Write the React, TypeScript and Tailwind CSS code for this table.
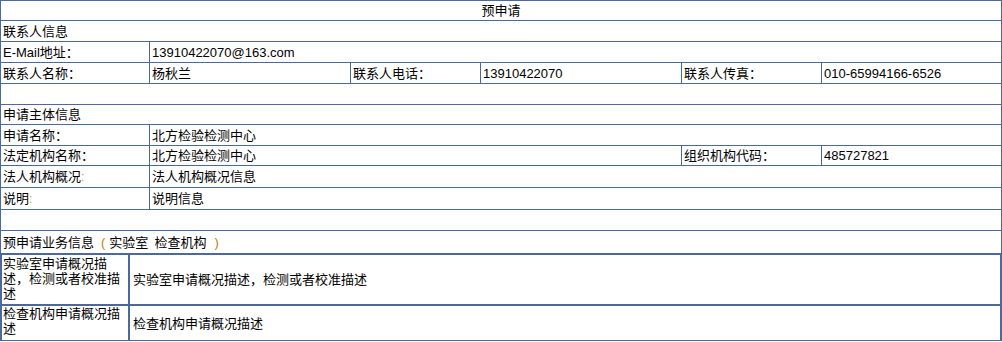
import React from "react";

type CellProps = { w?: string; children?: React.ReactNode; edge?: boolean };

// A single bordered cell of the form grid; `edge` marks the last cell in a row.
function Cell({ w, children, edge }: CellProps) {
  return (
    <div
      className={
        (w ? w + " shrink-0 " : "flex-1 ") +
        (edge ? "" : "border-r border-[#4b6a9b] ") +
        "flex items-center overflow-hidden whitespace-nowrap pl-[2px]"
      }
    >
      {children}
    </div>
  );
}

function Row({ h, children }: { h: string; children?: React.ReactNode }) {
  return <div className={h + " flex border-b border-[#4b6a9b]"}>{children}</div>;
}

const Colon = () => <span className="text-[#e6a000]">:</span>;

export default function App() {
  return (
    <div className="w-[1002px] bg-white text-[13px] leading-[15px] text-black font-['Liberation_Sans','Noto_Sans_CJK_SC',sans-serif]">
      <div className="border-x border-t border-[#4b6a9b]">
        <Row h="h-[20px]">
          <div className="flex flex-1 items-center justify-center">预申请</div>
        </Row>
        <Row h="h-[21px]">
          <Cell edge>联系人信息</Cell>
        </Row>
        <Row h="h-[21px]">
          <Cell w="w-[149px]">E-Mail地址：</Cell>
          <Cell edge>13910422070@163.com</Cell>
        </Row>
        <Row h="h-[21px]">
          <Cell w="w-[149px]">联系人名称：</Cell>
          <Cell w="w-[201px]">杨秋兰</Cell>
          <Cell w="w-[130px]">联系人电话：</Cell>
          <Cell w="w-[201px]">13910422070</Cell>
          <Cell w="w-[140px]">联系人传真：</Cell>
          <Cell edge>010-65994166-6526</Cell>
        </Row>
        <Row h="h-[21px]" />
        <Row h="h-[20px]">
          <Cell edge>申请主体信息</Cell>
        </Row>
        <Row h="h-[21px]">
          <Cell w="w-[149px]">申请名称：</Cell>
          <Cell edge>北方检验检测中心</Cell>
        </Row>
        <Row h="h-[20px]">
          <Cell w="w-[149px]">法定机构名称：</Cell>
          <Cell w="w-[532px]">北方检验检测中心</Cell>
          <Cell w="w-[140px]">组织机构代码：</Cell>
          <Cell edge>485727821</Cell>
        </Row>
        <Row h="h-[22px]">
          <Cell w="w-[149px]">
            法人机构概况
            <Colon />
          </Cell>
          <Cell edge>法人机构概况信息</Cell>
        </Row>
        <Row h="h-[22px]">
          <Cell w="w-[149px]">
            说明
            <Colon />
          </Cell>
          <Cell edge>说明信息</Cell>
        </Row>
        <Row h="h-[21px]" />
        <Row h="h-[23px]">
          <Cell edge>
            <span>预申请业务信息</span>
            <span className="ml-[7px] text-[#c08000]">(</span>
            <span className="ml-[4px]">实验室</span>
            <span className="ml-[6px]">检查机构</span>
            <span className="ml-[8px] text-[#c08000]">)</span>
          </Cell>
        </Row>
      </div>

      <div className="border-x-2 border-t border-[#4b6a9b]">
        <div className="flex h-[51px] border-b-2 border-[#4b6a9b]">
          <div className="w-[128px] shrink-0 border-r-2 border-[#4b6a9b] pl-px pt-px whitespace-nowrap">
            实验室申请概况描
            <br />
            述，检测或者校准描
            <br />述
          </div>
          <div className="flex flex-1 items-center pl-[3px]">实验室申请概况描述，检测或者校准描述</div>
        </div>
        <div className="flex h-[35px] border-b border-[#4b6a9b]">
          <div className="w-[128px] shrink-0 border-r-2 border-[#4b6a9b] pl-px whitespace-nowrap">
            检查机构申请概况描
            <br />述
          </div>
          <div className="flex flex-1 items-center pl-[3px]">检查机构申请概况描述</div>
        </div>
      </div>
    </div>
  );
}
